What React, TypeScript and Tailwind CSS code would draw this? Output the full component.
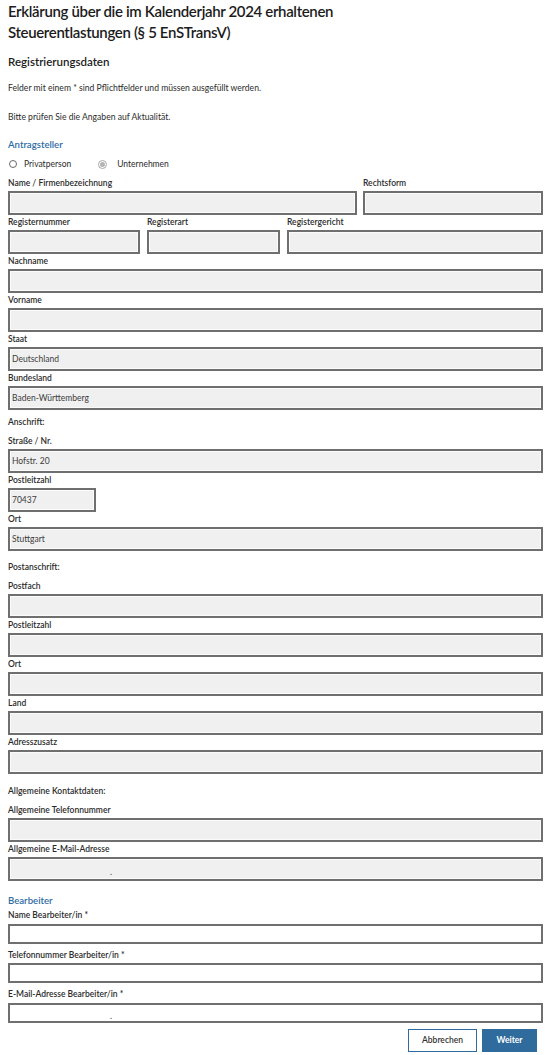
import React from "react";

const font = { fontFamily: "Lato, 'Open Sans', 'Liberation Sans', sans-serif" };

function Label({ children, className = "" }: { children: React.ReactNode; className?: string }) {
  return (
    <div className={"h-[15px] flex items-center text-[8.5px] font-semibold text-[#2b2b2b] whitespace-nowrap " + className}>
      {children}
    </div>
  );
}

function Field({ value, className = "", children }: { value?: string; className?: string; children?: React.ReactNode }) {
  return (
    <div
      className={
        "h-[24px] border-2 border-[#6f6f6f] bg-[#f0f0f0] shadow-[inset_0_0_0_1px_#fbfbfb] flex items-center pl-[2px] text-[8.5px] text-[#3c3c3c] " +
        className
      }
    >
      {value}
      {children}
    </div>
  );
}

function WhiteField({ children }: { children?: React.ReactNode }) {
  return (
    <div className="h-[20px] border-2 border-[#6f6f6f] bg-white flex items-center text-[8.5px] text-[#3c3c3c]">
      {children}
    </div>
  );
}

function Heading({ children, className }: { children: React.ReactNode; className: string }) {
  return <div className={"leading-[12px] text-[8.5px] font-semibold text-[#2b2b2b] " + className}>{children}</div>;
}

export default function App() {
  return (
    <div style={font} className="w-[550px] h-[1055px] bg-white pl-[8px] pr-[7px] overflow-hidden text-[#1f1f1f]">
      <div className="pt-[1px] text-[15px] leading-[21px] font-semibold text-[#1c1c1c] tracking-[-0.35px]">
        <div>Erklärung über die im Kalenderjahr 2024 erhaltenen</div>
        <div>Steuerentlastungen (§ 5 EnSTransV)</div>
      </div>
      <div className="mt-[11px] h-[16px] flex items-center text-[11.5px] font-semibold text-[#1c1c1c]">Registrierungsdaten</div>
      <div className="mt-[12px] h-[12px] flex items-center text-[8.6px] text-[#2b2b2b]">
        Felder mit einem * sind Pflichtfelder und müssen ausgefüllt werden.
      </div>
      <div className="mt-[17px] h-[12px] flex items-center text-[8.6px] text-[#2b2b2b]">
        Bitte prüfen Sie die Angaben auf Aktualität.
      </div>
      <div className="mt-[14px] h-[16px] flex items-center text-[9.6px] font-semibold text-[#2f6ca4]">Antragsteller</div>
      <div className="mt-[3px] h-[16px] flex items-center text-[8.5px] text-[#2b2b2b]">
        <span className="ml-[1px] w-[8px] h-[8px] rounded-full border border-[#6a6a6a] bg-white"></span>
        <span className="ml-[7px]">Privatperson</span>
        <span className="ml-[27px] w-[9px] h-[9px] rounded-full border border-[#a9a9a9] bg-white flex items-center justify-center">
          <span className="w-[5px] h-[5px] rounded-full bg-[#b3b3b3]"></span>
        </span>
        <span className="ml-[10px]">Unternehmen</span>
      </div>

      <div className="mt-[4px] flex gap-[6px]">
        <div className="w-[349px]">
          <Label>Name / Firmenbezeichnung</Label>
          <Field />
        </div>
        <div className="flex-1">
          <Label>Rechtsform</Label>
          <Field />
        </div>
      </div>
      <div className="flex gap-[7px]">
        <div className="w-[132px]">
          <Label>Registernummer</Label>
          <Field />
        </div>
        <div className="w-[133px]">
          <Label>Registerart</Label>
          <Field />
        </div>
        <div className="flex-1">
          <Label>Registergericht</Label>
          <Field />
        </div>
      </div>
      <Label>Nachname</Label>
      <Field />
      <Label>Vorname</Label>
      <Field />
      <Label>Staat</Label>
      <Field value="Deutschland" />
      <Label>Bundesland</Label>
      <Field value="Baden-Württemberg" />

      <Heading className="h-[24px] pt-[6px]">Anschrift:</Heading>
      <Label>Straße / Nr.</Label>
      <Field value="Hofstr. 20" />
      <Label>Postleitzahl</Label>
      <Field value="70437" className="w-[88px]" />
      <Label>Ort</Label>
      <Field value="Stuttgart" />

      <Heading className="h-[28px] pt-[10px]">Postanschrift:</Heading>
      <Label>Postfach</Label>
      <Field />
      <Label>Postleitzahl</Label>
      <Field />
      <Label>Ort</Label>
      <Field />
      <Label>Land</Label>
      <Field />
      <Label>Adresszusatz</Label>
      <Field />

      <Heading className="h-[29px] pt-[11px]">Allgemeine Kontaktdaten:</Heading>
      <Label>Allgemeine Telefonnummer</Label>
      <Field />
      <Label>Allgemeine E-Mail-Adresse</Label>
      <Field>
        <span className="ml-[98px] mt-[6px] leading-none">.</span>
      </Field>

      <div className="h-[26px] pt-[14px] leading-[12px] text-[9.6px] font-semibold text-[#2f6ca4]">Bearbeiter</div>
      <div className="h-[17px] flex items-center text-[8.5px] font-semibold text-[#2b2b2b]">Name Bearbeiter/in *</div>
      <WhiteField />
      <div className="h-[19px] pt-[5px] leading-[12px] text-[8.5px] font-semibold text-[#2b2b2b]">Telefonnummer Bearbeiter/in *</div>
      <WhiteField />
      <div className="h-[20px] pt-[5px] leading-[12px] text-[8.5px] font-semibold text-[#2b2b2b]">E-Mail-Adresse Bearbeiter/in *</div>
      <WhiteField>
        <span className="ml-[100px] mt-[6px] leading-none">.</span>
      </WhiteField>

      <div className="mt-[6px] flex justify-end gap-[5px] pr-[6px]">
        <button className="w-[69px] h-[23px] border border-[#2f6b9c] bg-white text-[8.5px] font-semibold text-[#333]">
          Abbrechen
        </button>
        <button className="w-[55px] h-[23px] bg-[#2f6b9c] text-[8.5px] font-bold text-white">Weiter</button>
      </div>
    </div>
  );
}
